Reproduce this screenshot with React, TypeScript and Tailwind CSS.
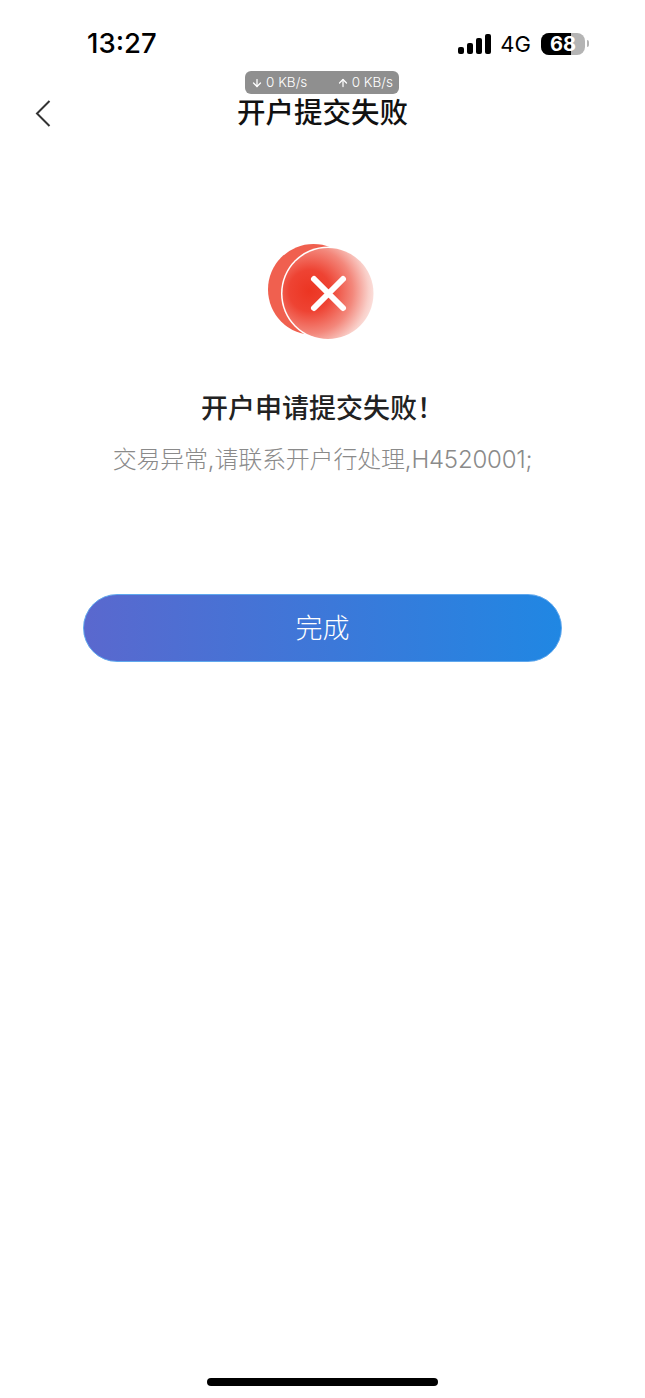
import React from 'react';
import { ArrowDown, ArrowUp } from 'lucide-react';

const cjk = "font-['Inter','Noto_Sans_CJK_SC',sans-serif]";

const SignalBars = () => (
  <div className="mr-[-1px] flex items-end gap-[3px]">
    <div className="h-[7px] w-[6px] rounded-[2px] bg-black" />
    <div className="h-[11px] w-[6px] rounded-[2px] bg-black" />
    <div className="h-[16px] w-[6px] rounded-[2px] bg-black" />
    <div className="h-[20px] w-[6px] rounded-[2px] bg-black" />
  </div>
);

const Battery = () => (
  <div className="flex items-center gap-[2px]">
    <div className="relative flex h-[22px] w-[44px] items-center justify-center overflow-hidden rounded-[8px] bg-[#b4b4b4]">
      <div className="absolute inset-y-0 left-0 w-[30px] bg-black" />
      <span className="relative text-[20px] leading-none font-bold text-white">68</span>
    </div>
    <div className="h-[7px] w-[2px] rounded-r-full bg-[#b4b4b4]" />
  </div>
);

const BackIcon = () => (
  <svg width="16" height="28" viewBox="0 0 16 28" fill="none" className="absolute top-[15px] left-[35px]">
    <path d="M14.5 1 L2 13.5 L14.5 26" stroke="#333333" strokeWidth="2" />
  </svg>
);

const FailIcon = () => (
  <svg width="106" height="96" viewBox="0 0 106 96" className="block">
    <defs>
      <radialGradient id="fail-glow" cx="0.3" cy="0.47" r="0.76">
        <stop offset="0" stopColor="#ec3522" />
        <stop offset="0.3" stopColor="#ee4333" />
        <stop offset="0.62" stopColor="#f3877b" />
        <stop offset="0.85" stopColor="#f9cfc9" />
        <stop offset="1" stopColor="#fdeeec" />
      </radialGradient>
    </defs>
    <circle cx="45.5" cy="45.5" r="45.5" fill="#f0604f" />
    <circle cx="60" cy="49.5" r="47" fill="#ffffff" />
    <circle cx="60" cy="49.5" r="45.5" fill="url(#fail-glow)" />
    <path d="M46 35 L75 64 M75 35 L46 64" stroke="#ffffff" strokeWidth="6" strokeLinecap="round" />
  </svg>
);

export default function App() {
  return (
    <div className={`relative flex h-[1398px] w-[645px] flex-col items-center overflow-hidden bg-white text-black ${cjk}`}>
      {/* status bar */}
      <div className="flex h-[85px] w-full items-start justify-between pt-[27px] pr-[56px] pl-[87px]">
        <span className="text-[27.5px] leading-[33px] font-medium">13:27</span>
        <div className="flex h-[33px] items-center gap-[10px]">
          <SignalBars />
          <span className="text-[22px] leading-none font-normal">4G</span>
          <Battery />
        </div>
      </div>

      {/* network speed overlay */}
      <div className="absolute top-[71px] left-[245px] flex h-[23px] w-[154px] items-center justify-between rounded-[6px] bg-[#8f8f8f] px-[6px] text-[13.5px] leading-none font-light text-white">
        <span className="flex items-center gap-[3px]">
          <ArrowDown size={12} strokeWidth={2.5} />0 KB/s
        </span>
        <span className="flex items-center gap-[3px]">
          <ArrowUp size={12} strokeWidth={2.5} />0 KB/s
        </span>
      </div>

      {/* nav */}
      <div className="relative flex h-[56px] w-full items-center justify-center">
        <BackIcon />
        <h1 className="text-[28.5px] leading-none font-medium text-[#111111]">开户提交失败</h1>
      </div>

      <div className="mt-[103px] ml-[-3px]">
        <FailIcon />
      </div>

      <p className="mt-[50px] text-[27px] leading-[38px] font-medium text-[#222222]">开户申请提交失败！</p>
      <p className="mt-[14px] text-[24px] leading-[36px] font-light tracking-[-0.2px] text-[#8a8a8a]">交易异常,请联系开户行处理,H4520001;</p>

      <button className="mt-[116px] flex h-[68px] w-[479px] items-center justify-center rounded-full border border-[#5fa8ee] bg-[linear-gradient(90deg,#5a68ce,#2087e3)] pt-[2px] text-[27px] font-light text-white">
        完成
      </button>

      <div className="mt-auto mb-[12px] h-[8px] w-[231px] rounded-full bg-black" />
    </div>
  );
}
